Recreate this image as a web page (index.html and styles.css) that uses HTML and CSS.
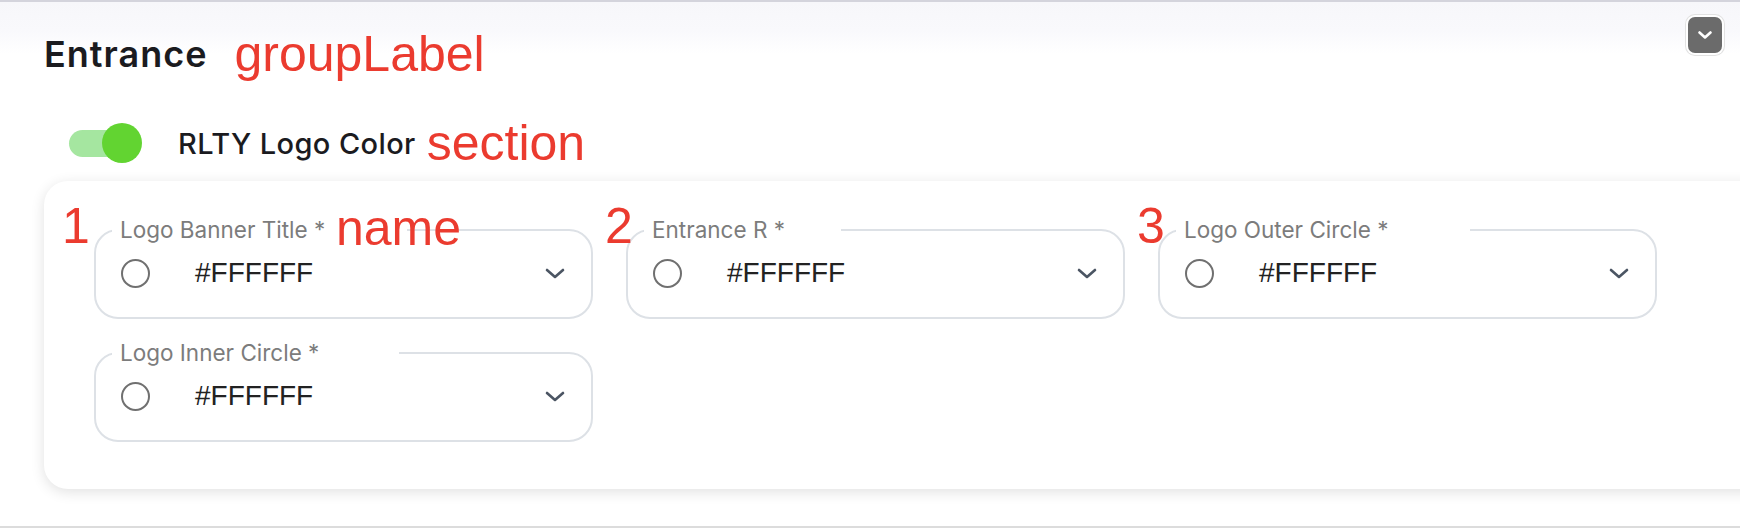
FILE: index.html
```html
<!DOCTYPE html>
<html lang="en">
<head>
<meta charset="utf-8">
<title>Entrance</title>
<link rel="stylesheet" href="styles.css">
</head>
<body>
<div class="panel">
  <header class="group-head">
    <div class="title-row">
      <h2 class="group-title">Entrance</h2>
      <span class="annot annot-group">groupLabel</span>
    </div>
    <button class="collapse-btn" type="button" aria-label="Collapse">
      <svg width="14" height="8" viewBox="0 0 14 8"><path d="M1.5 1.5 L7 6.5 L12.5 1.5" fill="none" stroke="#fff" stroke-width="2.6" stroke-linecap="round" stroke-linejoin="round"/></svg>
    </button>
  </header>

  <div class="section-row">
    <span class="switch"><span class="switch-track"></span><span class="switch-thumb"></span></span>
    <span class="section-title">RLTY Logo Color</span>
    <span class="annot annot-section">section</span>
  </div>

  <div class="card">
    <div class="fields">
      <div class="field-wrap">
        <span class="annot annot-num annot-num-first">1</span>
        <span class="annot annot-name">name</span>
        <fieldset class="field">
          <legend data-l="Logo Banner Title *">Logo Banner Title *</legend>
          <div class="field-body">
            <span class="swatch"></span>
            <span class="hex">#FFFFFF</span>
            <svg class="chev" width="20" height="11" viewBox="0 0 20 11"><path d="M2 2 L10 9 L18 2" fill="none" stroke="#4b5563" stroke-width="2.6" stroke-linecap="round" stroke-linejoin="round"/></svg>
          </div>
        </fieldset>
      </div>
      <div class="field-wrap">
        <span class="annot annot-num">2</span>
        <fieldset class="field">
          <legend data-l="Entrance R *">Entrance R *</legend>
          <div class="field-body">
            <span class="swatch"></span>
            <span class="hex">#FFFFFF</span>
            <svg class="chev" width="20" height="11" viewBox="0 0 20 11"><path d="M2 2 L10 9 L18 2" fill="none" stroke="#4b5563" stroke-width="2.6" stroke-linecap="round" stroke-linejoin="round"/></svg>
          </div>
        </fieldset>
      </div>
      <div class="field-wrap">
        <span class="annot annot-num">3</span>
        <fieldset class="field">
          <legend data-l="Logo Outer Circle *">Logo Outer Circle *</legend>
          <div class="field-body">
            <span class="swatch"></span>
            <span class="hex">#FFFFFF</span>
            <svg class="chev" width="20" height="11" viewBox="0 0 20 11"><path d="M2 2 L10 9 L18 2" fill="none" stroke="#4b5563" stroke-width="2.6" stroke-linecap="round" stroke-linejoin="round"/></svg>
          </div>
        </fieldset>
      </div>
      <div class="field-wrap">
        <fieldset class="field">
          <legend data-l="Logo Inner Circle *">Logo Inner Circle *</legend>
          <div class="field-body">
            <span class="swatch"></span>
            <span class="hex">#FFFFFF</span>
            <svg class="chev" width="20" height="11" viewBox="0 0 20 11"><path d="M2 2 L10 9 L18 2" fill="none" stroke="#4b5563" stroke-width="2.6" stroke-linecap="round" stroke-linejoin="round"/></svg>
          </div>
        </fieldset>
      </div>
    </div>
  </div>

  <div class="rule"></div>
</div>
</body>
</html>
```

FILE: styles.css
```css
* { box-sizing: border-box; }
html, body { margin: 0; padding: 0; }
body {
  width: 1740px;
  height: 529px;
  overflow: hidden;
  background: #ffffff;
  font-family: Inter, "Noto Sans", sans-serif;
}
.panel {
  border-top: 2px solid #d4d4dc;
  background: linear-gradient(#f7f7fa 0, #f9f9fc 28px, #ffffff 52px);
  height: 529px;
}
.group-head {
  display: flex;
  align-items: flex-start;
  padding: 15px 18px 0 44px;
}
.title-row {
  display: flex;
  align-items: center;
  height: 56px;
  margin-top: 9px;
}
.group-title {
  margin: 0;
  font-family: Inter, sans-serif;
  font-weight: 600;
  font-size: 36px;
  line-height: 40px;
  letter-spacing: 1px;
  color: #1b1b1f;
}
.annot {
  font-family: "Liberation Sans", Arial, sans-serif;
  font-size: 50px;
  line-height: 56px;
  font-weight: 400;
  color: #eb3b2f;
  white-space: nowrap;
}
.annot-group { margin-left: 27px; }
.collapse-btn {
  margin-left: auto;
  width: 34px;
  height: 36px;
  padding: 0;
  border: 0;
  border-radius: 7px;
  background: #6b6b6b;
  box-shadow: 0 0 0 2px #ffffff, 0 0 0 3px #e2e2e2;
  display: flex;
  align-items: center;
  justify-content: center;
}
.section-row {
  display: flex;
  align-items: center;
  height: 56px;
  margin-top: 33px;
  padding-left: 69px;
}
.switch {
  display: flex;
  align-items: center;
  width: 73px;
  height: 40px;
}
.switch-track {
  width: 64px;
  height: 27px;
  border-radius: 14px;
  background: #a5e6a0;
  flex: none;
}
.switch-thumb {
  width: 40px;
  height: 40px;
  border-radius: 50%;
  background: #62d431;
  margin-left: -31px;
  flex: none;
}
.section-title {
  margin-left: 36px;
  font-weight: 500;
  font-size: 29px;
  letter-spacing: 0.4px;
  color: #1b1b1f;
}
.annot-section { margin-left: 11px; }
.card {
  margin: 10px -60px 0 44px;
  background: #ffffff;
  border-radius: 24px;
  box-shadow: 0 3px 14px rgba(0, 0, 0, 0.12);
  padding: 37px 0 47px 50px;
}
.fields {
  display: grid;
  grid-template-columns: repeat(3, 499px);
  column-gap: 33px;
  row-gap: 22px;
}
.field-wrap { position: relative; }
.annot-num {
  position: absolute;
  left: -21px;
  top: -16px;
  line-height: 49px;
}
.annot-num-first { left: -32px; }
.annot-name {
  position: absolute;
  left: 242px;
  top: -14px;
  line-height: 49px;
}
.field {
  margin: 0;
  padding: 0;
  min-width: 0;
  border: 2px solid #dde1e6;
  border-radius: 24px;
}
.field legend {
  margin-left: 16px;
  padding: 0 8px;
  font-size: 22.5px;
  line-height: 24px;
  font-weight: 400;
  color: #7c7c7c;
  white-space: nowrap;
}
.field legend::after {
  content: attr(data-l);
  font-size: 0.36em;
  line-height: 0;
  visibility: hidden;
}
.field-body {
  display: flex;
  align-items: center;
  height: 75px;
  padding: 0 26px 13px 25px;
}
.swatch {
  flex: none;
  width: 29px;
  height: 29px;
  border: 2px solid #707070;
  border-radius: 50%;
}
.hex {
  margin-left: 45px;
  font-family: "Liberation Sans", Arial, sans-serif;
  font-size: 28px;
  color: #222222;
}
.chev { margin-left: auto; flex: none; }
.rule {
  height: 2px;
  background: #dcdcdc;
  margin-top: 37px;
}
```
